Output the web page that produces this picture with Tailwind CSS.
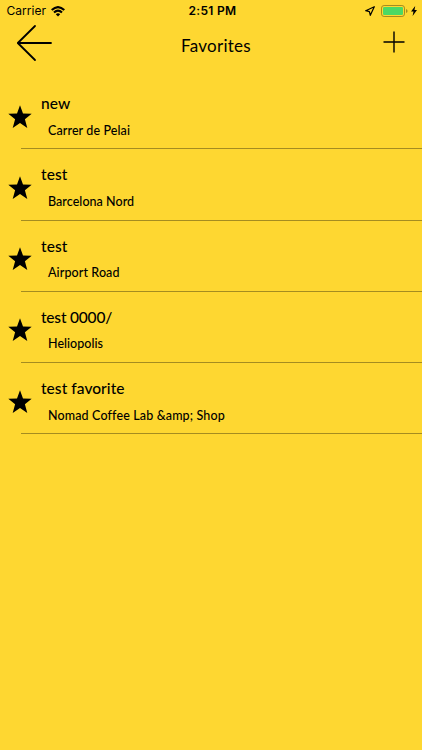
<!DOCTYPE html>
<html lang="en">
<head>
<meta charset="utf-8">
<title>Favorites</title>
<script src="https://cdn.jsdelivr.net/npm/@tailwindcss/browser@4"></script>
</head>
<body class="bg-[#fed731] text-black w-[422px] h-[750px] overflow-hidden font-['Lato',sans-serif]">
<svg class="hidden"><symbol id="star" viewBox="0 0 24 24"><path d="M12 .3 15 8.5 23.7 8.8 16.9 14.2 19.3 22.9 12 18 4.7 22.9 7.1 14.2 .3 8.8 9 8.5Z"/></symbol></svg>
<header class="h-[78px]">
  <div class="grid grid-cols-3 h-[22px] items-center font-['Inter',sans-serif] text-[12px] leading-[22px]">
    <div class="flex items-center pl-[6.5px] gap-[5px]"><span class="tracking-[0.02px]">Carrier</span>
      <svg class="w-[14px] h-[11px]" viewBox="0 0 14 11" fill="none" stroke="#000" stroke-width="2.1"><path d="M.7 4.1Q7-1.9 13.3 4.1M3 6.5Q7 2.7 11 6.5"/><path d="M4.8 8.2Q7 6.3 9.2 8.2L7 10.4Z" fill="#000" stroke="none"/></svg>
    </div>
    <span class="text-center font-semibold tracking-[0.3px] pl-[3px]">2:51 PM</span>
    <div class="flex items-center justify-end pr-[5px]">
      <svg class="w-[10px] h-[10px] mr-[6px]" viewBox="0 0 10 10" fill="none" stroke="#000" stroke-width="1.2" stroke-linejoin="round"><path d="M9.3.7.7 4.7 4.4 5.6 5.3 9.3Z"/></svg>
      <svg class="w-[27px] h-[12px] mr-[3px]" viewBox="0 0 27 12"><rect x=".5" y=".5" width="23" height="11" rx="2.6" fill="none" stroke="#a58c20"/><rect x="2" y="2" width="20" height="8" rx="1.3" fill="#4cd964"/><path d="M25 4Q26.6 4.5 26.6 6T25 8Z" fill="#a58c20"/></svg>
      <svg class="w-[6px] h-[10px]" viewBox="0 0 6 10"><path d="M4.2 0 0 5.6H2.5L1.6 10 6 4.1H3.5Z"/></svg>
    </div>
  </div>
  <nav class="grid grid-cols-3 h-[44px]">
    <svg class="w-[38px] h-[38px] ml-[15px] mt-[2px]" viewBox="0 0 38 38" fill="none" stroke="#000" stroke-width="1.8" stroke-linecap="round" stroke-linejoin="round"><path d="M20 2 2.8 19 20 36M3 19H36"/></svg>
    <h1 class="text-center text-[17px] leading-[24px] mt-[12px] pl-[10px] tracking-[0.28px] whitespace-nowrap">Favorites</h1>
    <svg class="w-[22px] h-[22px] justify-self-end mr-[17px] mt-[9px]" viewBox="0 0 22 22" stroke="#000" stroke-width="1.4"><path d="M11 .5V21.5M.5 11H21.5"/></svg>
  </nav>
</header>
<main class="[&_section]:h-[71.25px] [&_section]:flex [&_section]:items-start [&_section>svg]:w-[24px] [&_section>svg]:h-[24px] [&_section>svg]:ml-[8px] [&_section>svg]:mt-[26.6px] [&_section>div]:ml-[9px] [&_section>div]:pt-[15px] [&_h2]:text-[15.5px] [&_h2]:leading-[20px] [&_h2]:font-medium [&_p]:pl-[7px] [&_p]:mt-[8.5px] [&_p]:text-[12.5px] [&_p]:leading-[18px] [&_p]:font-medium [&_hr]:ml-[21px] [&_hr]:-mt-px [&_hr]:h-px [&_hr]:border-0 [&_hr]:bg-[#a58c20] whitespace-nowrap">
  <section><svg><use href="#star"/></svg><div><h2 class="tracking-[0.1px]">new</h2><p class="tracking-[0.1px]">Carrer de Pelai</p></div></section><hr>
  <section><svg><use href="#star"/></svg><div><h2 class="tracking-[0.1px]">test</h2><p class="tracking-[0.05px]">Barcelona Nord</p></div></section><hr>
  <section><svg><use href="#star"/></svg><div><h2 class="tracking-[0.1px]">test</h2><p class="tracking-[0.1px]">Airport Road</p></div></section><hr>
  <section><svg><use href="#star"/></svg><div><h2 class="tracking-[-0.2px]">test 0000/</h2><p class="tracking-[0.02px]">Heliopolis</p></div></section><hr>
  <section><svg><use href="#star"/></svg><div><h2 class="tracking-[0.05px]">test favorite</h2><p class="tracking-[0.14px]">Nomad Coffee Lab &amp;amp; Shop</p></div></section><hr>
</main>
</body>
</html>
